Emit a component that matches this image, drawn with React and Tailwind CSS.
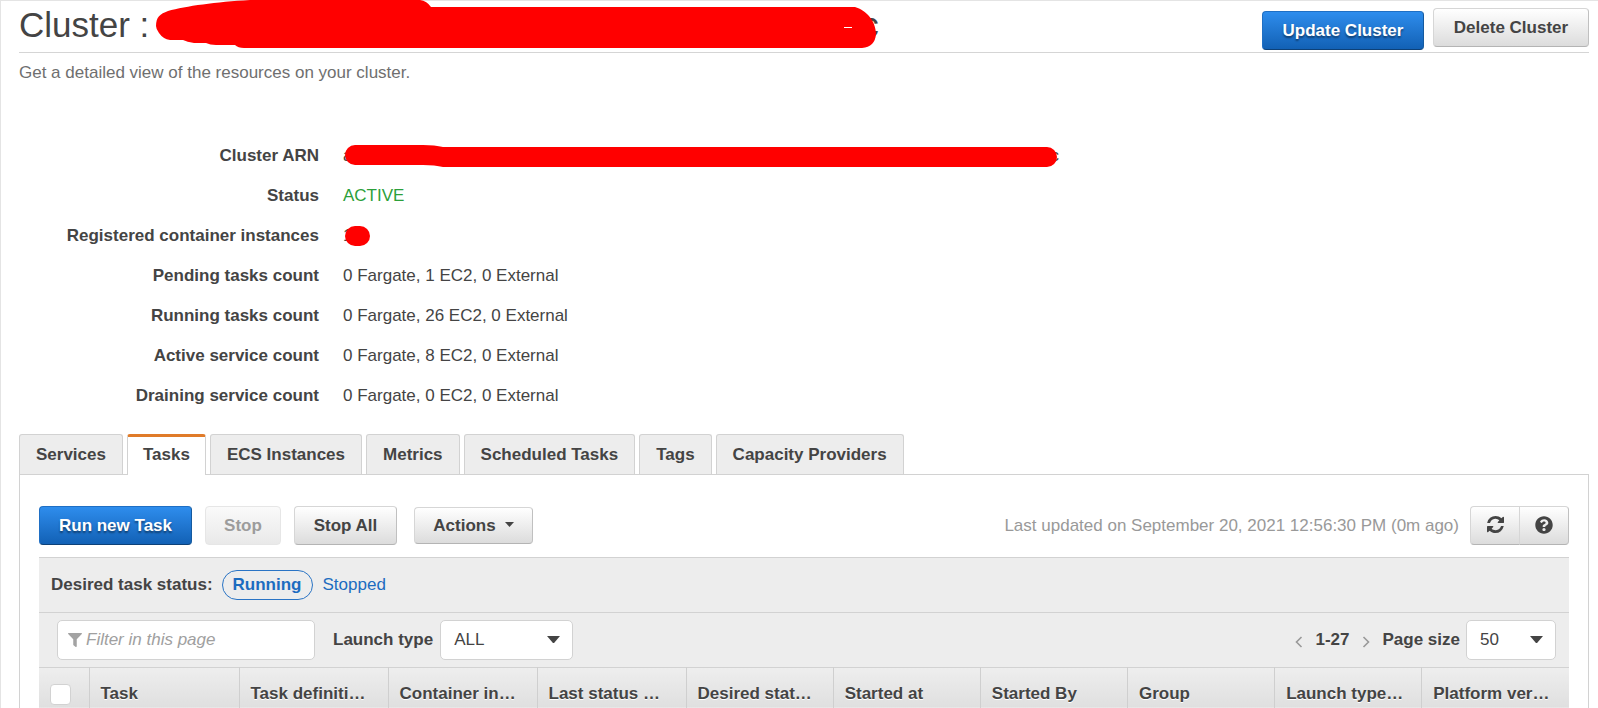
import React from "react";
import { FaFilter, FaQuestionCircle } from "react-icons/fa";

const plainButton =
  "rounded-[4px] border border-[#d6d6d6] border-b-[#b4b4b4] border-r-[#c0c0c0] bg-linear-to-b from-white to-[#dcdcdc] font-bold text-[#444]";
const blueButton =
  "rounded-[4px] border border-[#1f6fc4] border-b-[#0d4178] border-r-[#155a9f] bg-linear-to-b from-[#2e8ded] to-[#1261b5] font-bold text-white [text-shadow:0_2px_2px_rgba(0,0,0,0.45)]";

function RefreshIcon() {
  return (
    <svg viewBox="0 0 1536 1536" className="size-[17px]" fill="currentColor" aria-hidden="true">
      <path d="M1511 928q0 5-1 7-64 268-268 434.500t-478 166.500q-146 0-282.500-55t-243.500-157l-129 129q-19 19-45 19t-45-19-19-45v-448q0-26 19-45t45-19h448q26 0 45 19t19 45-19 45l-137 137q71 66 161 102t187 36q134 0 250-65t186-179q11-17 53-117 8-23 30-23h192q13 0 22.500 9.500t9.500 22.500zm25-800v448q0 26-19 45t-45 19h-448q-26 0-45-19t-19-45 19-45l138-138q-148-137-349-137-134 0-250 65t-186 179q-11 17-53 117-8 23-30 23h-199q-13 0-22.500-9.500t-9.500-22.500v-7q65-268 270-434.500t480-166.500q146 0 284 55.500t245 156.500l130-129q19-19 45-19t45 19 19 45z" />
    </svg>
  );
}

function Chevron({ d }) {
  return (
    <svg viewBox="0 0 8 12" className="mt-[3px] h-3 w-2" fill="none" stroke="#999" strokeWidth="1.6" aria-hidden="true">
      <path d={d} />
    </svg>
  );
}

function Select({ id, options, className }) {
  return (
    <div className={"relative " + className}>
      <select
        id={id}
        className="h-10 w-full appearance-none rounded-[5px] border border-[#d2d2d2] bg-white pl-[13px] text-[#444]"
      >
        {options.map((o) => (
          <option key={o}>{o}</option>
        ))}
      </select>
      <svg viewBox="0 0 13 8" className="pointer-events-none absolute top-4 right-[13px] h-2 w-[13px]" fill="#444" aria-hidden="true">
        <path d="M0 0h13L7.500 6.600q-1 1-2 0z" />
      </svg>
    </div>
  );
}

const details = [
  [
    "Cluster ARN",
    <span className="flex items-center">
      a
      <svg width="712" height="22" className="relative z-10 -ml-[7px]" fill="#f00" aria-hidden="true">
        <path d="M10 0H78Q90 0 98 2H702a10 10 0 0 1 0 20H98Q90 20 78 20H10a10 10 0 0 1 0-20z" />
      </svg>
      <span className="-ml-[7px]">c</span>
    </span>,
  ],
  ["Status", <span className="text-[#2c9f3a]">ACTIVE</span>],
  [
    "Registered container instances",
    <span className="flex items-center">
      1
      <svg width="25" height="20" className="relative z-10 -ml-[7px]" fill="#f00" aria-hidden="true">
        <rect width="25" height="20" rx="10" />
      </svg>
    </span>,
  ],
  ["Pending tasks count", "0 Fargate, 1 EC2, 0 External"],
  ["Running tasks count", "0 Fargate, 26 EC2, 0 External"],
  ["Active service count", "0 Fargate, 8 EC2, 0 External"],
  ["Draining service count", "0 Fargate, 0 EC2, 0 External"],
];

const tabs = ["Services", "Tasks", "ECS Instances", "Metrics", "Scheduled Tasks", "Tags", "Capacity Providers"];

const columns = [
  "Task",
  "Task definiti…",
  "Container in…",
  "Last status …",
  "Desired stat…",
  "Started at",
  "Started By",
  "Group",
  "Launch type…",
  "Platform ver…",
];

export default function App() {
  return (
    <main className="border-t border-l border-[#e4e4e4] bg-white pr-[9px] pl-[18px] font-['Liberation_Sans',Arial,sans-serif] text-[17px] leading-6 text-[#444]">
      <header className="flex h-[52px] items-start justify-between border-b border-[#d5d5d5]">
        <h1 className="flex h-12 items-center text-[35px] whitespace-nowrap">
          Cluster :
          <svg
            width="720"
            height="48"
            viewBox="0 0 720 48"
            className="relative z-10 ml-[7px] overflow-visible"
            fill="#f00"
            aria-hidden="true"
          >
            <path d="M0 25C0 16 4 13 12 10C30 5 60 1 94 -1H264Q271 0 275 6H699C710 9 720 20 720 33Q719 46 706 47H88Q82 47 79 44H60Q54 44 50 42H38Q31 41 27 39H14Q7 38 3 32Q0 28 0 25z" />
            <path d="M688 26h8v1h-8z" fill="#fff" />
          </svg>
          <span className="-ml-[15px]">c</span>
        </h1>
        <div className="flex items-start gap-[9px] pt-[7px]">
          <button className={"mt-[3px] h-[39px] w-[162px] " + blueButton}>Update Cluster</button>
          <button className={"h-[39px] w-[156px] " + plainButton}>Delete Cluster</button>
        </div>
      </header>
      <p className="pt-2 text-[#6f6f6f]">Get a detailed view of the resources on your cluster.</p>

      <dl className="mt-[51px]">
        {details.map(([label, value]) => (
          <div key={label} className="flex h-10 items-center">
            <dt className="w-[300px] text-right font-bold">{label}</dt>
            <dd className="ml-6">{value}</dd>
          </div>
        ))}
      </dl>

      <nav role="tablist" className="mt-[18px] flex gap-1">
        {tabs.map((t) =>
          t === "Tasks" ? (
            <button
              key={t}
              role="tab"
              aria-selected="true"
              className="relative z-10 -mb-px h-[41px] rounded-t-[3px] border-x border-t-[3px] border-x-[#d2d2d2] border-t-[#e07b29] bg-white px-[15px] pb-[2px] font-bold"
            >
              {t}
            </button>
          ) : (
            <button
              key={t}
              role="tab"
              aria-selected="false"
              className="h-10 rounded-t-[3px] border border-b-0 border-[#d2d2d2] bg-[#ededed] px-4 font-bold"
            >
              {t}
            </button>
          )
        )}
      </nav>

      <section className="border-x border-t border-[#d2d2d2] px-[19px] pt-[31px]">
        <div className="flex items-center">
          <button className={"h-[39px] w-[153px] " + blueButton}>Run new Task</button>
          <button
            disabled
            className="ml-[13px] h-[39px] w-[76px] rounded-[4px] border border-[#e6e6e6] bg-linear-to-b from-[#fafafa] to-[#e9e9e9] font-bold text-[#9c9c9c]"
          >
            Stop
          </button>
          <button className={"ml-[13px] h-[39px] w-[103px] " + plainButton}>Stop All</button>
          <button className={"ml-[17px] flex h-[37px] w-[119px] items-center justify-center gap-[9px] " + plainButton}>
            Actions
            <svg viewBox="0 0 9 5" className="-mt-[2px] h-[5px] w-[9px]" fill="#444" aria-hidden="true">
              <path d="M0 0h9L4.500 5z" />
            </svg>
          </button>
          <p className="ml-auto text-[#999]">Last updated on September 20, 2021 12:56:30 PM (0m ago)</p>
          <div className="ml-[11px] flex">
            <button
              aria-label="Refresh"
              className={"flex h-[39px] w-[50px] items-center justify-center rounded-r-none pb-[2px] " + plainButton}
            >
              <RefreshIcon />
            </button>
            <button
              aria-label="Help"
              className={"-ml-px flex h-[39px] w-[50px] items-center justify-center rounded-l-none pb-[2px] " + plainButton}
            >
              <FaQuestionCircle className="size-[18px]" />
            </button>
          </div>
        </div>

        <div className="mt-3 flex h-[55px] items-center border-t border-[#d2d2d2] bg-[#ededed] pl-3">
          <span className="font-bold">Desired task status:</span>
          <a href="#running" className="ml-[9px] flex h-[30px] items-center rounded-full border border-[#2a74c5] px-[10px] font-bold text-[#1c6cc0]">
            Running
          </a>
          <a href="#stopped" className="ml-[10px] text-[#1c6cc0]">
            Stopped
          </a>
        </div>

        <div className="flex h-[55px] items-center border-t border-[#d2d2d2] bg-[#ededed] pr-[13px] pl-[18px]">
          <label className="flex h-10 w-[258px] items-center rounded-[5px] border border-[#d2d2d2] bg-white pl-[10px]">
            <FaFilter className="size-[14px] text-[#a3a3a3]" />
            <input
              aria-label="Filter in this page"
              placeholder="Filter in this page"
              className="ml-[4px] min-w-0 flex-1 bg-transparent italic outline-none placeholder:text-[#a0a0a0]"
            />
          </label>
          <label htmlFor="launch" className="ml-[18px] font-bold">
            Launch type
          </label>
          <Select id="launch" options={["ALL", "EC2", "FARGATE", "EXTERNAL"]} className="ml-[7px] w-[133px]" />
          <div className="ml-auto flex items-center">
            <button aria-label="Previous page">
              <Chevron d="M6.500 1L1.500 6L6.500 11" />
            </button>
            <span className="mx-[12px] font-bold">1-27</span>
            <button aria-label="Next page">
              <Chevron d="M1.500 1L6.500 6L1.500 11" />
            </button>
            <label htmlFor="size" className="ml-[13px] font-bold">
              Page size
            </label>
            <Select id="size" options={["50", "25", "10"]} className="ml-[6px] w-[90px]" />
          </div>
        </div>

        <table className="w-full table-fixed border-collapse bg-linear-to-b from-[#eeeeee] to-[#dfdfdf] text-left">
          <thead>
            <tr className="h-10 border-t border-[#d2d2d2]">
              <th className="w-[50px] pt-[14px] pl-[11px]">
                <input
                  type="checkbox"
                  aria-label="Select all tasks"
                  className="block size-[21px] appearance-none rounded-[4px] border border-[#d2d2d2] bg-white"
                />
              </th>
              {columns.map((c) => (
                <th
                  key={c}
                  className="border-l border-[#cfcfcf] pt-3 pl-[11px] whitespace-nowrap [text-shadow:0_1px_0_#fff] nth-2:w-[150px] nth-3:w-[149px] nth-4:w-[149px] nth-5:w-[149px]"
                >
                  {c}
                </th>
              ))}
            </tr>
          </thead>
        </table>
      </section>
    </main>
  );
}
